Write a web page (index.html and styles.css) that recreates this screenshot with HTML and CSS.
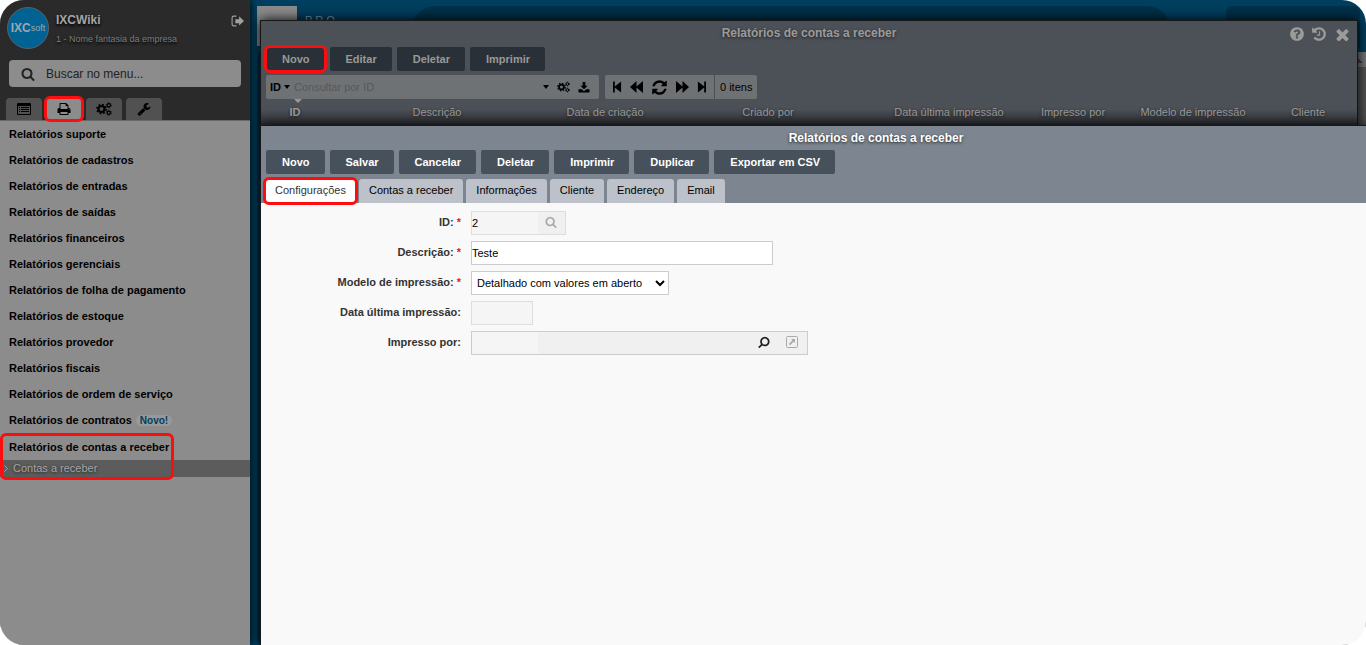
FILE: index.html
```html
<!DOCTYPE html>
<html lang="pt-BR">
<head>
<meta charset="utf-8">
<title>Relatórios de contas a receber</title>
<link rel="stylesheet" href="styles.css">
</head>
<body>
<svg class="sprite" aria-hidden="true">
  <symbol id="search" viewBox="0 0 1792 1792"><path d="M1216 832q0-185-131.5-316.5t-316.5-131.5-316.5 131.5-131.5 316.5 131.5 316.5 316.5 131.5 316.5-131.5 131.5-316.5zm512 832q0 52-38 90t-90 38q-54 0-90-38l-343-342q-179 124-399 124-143 0-273.5-55.5t-225-150-150-225-55.5-273.5 55.5-273.5 150-225 225-150 273.5-55.5 273.5 55.5 225 150 150 225 55.5 273.5q0 220-124 399l343 343q37 37 37 90z"/></symbol>
  <symbol id="print" viewBox="0 0 1792 1792"><path d="M448 1536h896v-256h-896v256zm0-640h896v-384h-160q-40 0-68-28t-28-68v-160h-640v640zm1152 64q0-26-19-45t-45-19-45 19-19 45 19 45 45 19 45-19 19-45zm128 0v416q0 13-9.500 22.500t-22.500 9.500h-224v160q0 40-28 68t-68 28h-960q-40 0-68-28t-28-68v-160h-224q-13 0-22.500-9.500t-9.500-22.500v-416q0-79 56.500-135.500t135.500-56.500h64v-544q0-40 28-68t68-28h672q40 0 88 20t76 48l152 152q28 28 48 76t20 88v256h64q79 0 135.500 56.500t56.500 135.500z"/></symbol>
  <symbol id="wrench" viewBox="0 0 1792 1792"><path d="M448 1472q0-26-19-45t-45-19-45 19-19 45 19 45 45 19 45-19 19-45zm644-420l-682 682q-37 37-90 37-52 0-91-37l-106-108q-38-36-38-90 0-53 38-91l681-681q39 98 114.500 173.500t173.500 114.500zm634-435q0 39-23 106-47 134-164.500 217.500t-258.500 83.500q-185 0-316.500-131.500t-131.500-316.500 131.500-316.500 316.500-131.500q58 0 121.500 16.500t107.500 46.500q16 11 16 28t-16 28l-293 169v224l193 107q5-3 79-48.500t135.500-81 70.500-35.500q15 0 23.500 10t8.500 25z"/></symbol>
  <symbol id="help" viewBox="0 0 1792 1792"><path d="M1024 1376v-192q0-14-9-23t-23-9h-192q-14 0-23 9t-9 23v192q0 14 9 23t23 9h192q14 0 23-9t9-23zm256-672q0-88-55.500-163t-138.500-116-170-41q-243 0-371 213-15 24 8 42l132 100q7 6 19 6 16 0 25-12 53-68 86-92 34-24 86-24 48 0 85.500 26t37.500 59q0 38-20 61t-68 45q-63 28-115.500 86.500t-52.500 125.500v36q0 14 9 23t23 9h192q14 0 23-9t9-23q0-19 21.500-49.500t54.500-49.500q32-18 49-28.500t46-35 44.500-48 28-60.500 12.500-81zm384 192q0 209-103 385.500t-279.500 279.500-385.500 103-385.500-103-279.500-279.500-103-385.500 103-385.500 279.500-279.500 385.500-103 385.500 103 279.500 279.500 103 385.500z"/></symbol>
  <symbol id="close" viewBox="256 256 1280 1280"><path d="M1490 1322q0 40-28 68l-136 136q-28 28-68 28t-68-28l-294-294-294 294q-28 28-68 28t-68-28l-136-136q-28-28-28-68t28-68l294-294-294-294q-28-28-28-68t28-68l136-136q28-28 68-28t68 28l294 294 294-294q28-28 68-28t68 28l136 136q28 28 28 68t-28 68l-294 294 294 294q28 28 28 68z"/></symbol>
  <symbol id="history" viewBox="0 0 1792 1792"><path d="M1664 896q0 156-61 298t-164 245-245 164-298 61q-172 0-327-72.500t-264-204.500q-7-10-6.500-22.500t8.500-20.500l137-138q10-9 25-9 16 2 23 12 73 95 179 147t225 52q104 0 198.500-40.500t163.500-109.500 109.500-163.500 40.500-198.500-40.500-198.500-109.500-163.500-163.500-109.500-198.500-40.500q-98 0-188 35.500t-160 101.500l137 138q31 30 14 69-17 40-59 40h-448q-26 0-45-19t-19-45v-448q0-42 40-59 39-17 69 14l130 129q107-101 244.500-156.500t284.500-55.500q156 0 298 61t245 164 164 245 61 298zm-640-288v448q0 14-9 23t-23 9h-320q-14 0-23-9t-9-23v-64q0-14 9-23t23-9h224v-352q0-14 9-23t23-9h64q14 0 23 9t9 23z"/></symbol>
  <symbol id="refresh" viewBox="0 0 1792 1792"><path d="M1639 1056q0 5-1 7-64 268-268 434.500t-478 166.500q-146 0-282.500-55t-243.500-157l-129 129q-19 19-45 19t-45-19-19-45v-448q0-26 19-45t45-19h448q26 0 45 19t19 45-19 45l-137 137q71 66 161 102t187 36q134 0 250-65t186-179q11-17 53-117 8-23 30-23h192q13 0 22.500 9.500t9.500 22.500zm25-800v448q0 26-19 45t-45 19h-448q-26 0-45-19t-19-45 19-45l138-138q-148-137-349-137-134 0-250 65t-186 179q-11 17-53 117-8 23-30 23h-199q-13 0-22.500-9.500t-9.500-22.500v-7q65-268 270-434.500t480-166.500q146 0 284 55.500t245 156.500l130-129q19-19 45-19t45 19 19 45z"/></symbol>
  <symbol id="cogs" viewBox="0 0 16 14"><g fill="none" stroke="currentColor"><circle cx="5.500" cy="7" r="3" stroke-width="2.200"/><circle cx="5.500" cy="7" r="4.600" stroke-width="1.600" stroke-dasharray="1.800 1.813"/><circle cx="12.800" cy="3.300" r="1.600" stroke-width="1.200"/><circle cx="12.800" cy="3.300" r="2.500" stroke-dasharray="1.200 1.418"/><circle cx="12.800" cy="10.700" r="1.600" stroke-width="1.200"/><circle cx="12.800" cy="10.700" r="2.500" stroke-dasharray="1.200 1.418"/></g></symbol>
  <symbol id="list" viewBox="0 0 14 12"><path fill-rule="evenodd" d="M1 0h12a1 1 0 0 1 1 1v10a1 1 0 0 1-1 1H1a1 1 0 0 1-1-1V1a1 1 0 0 1 1-1zM1 3v8h12V3zM2 4h1v1H2zM4 4h8v1H4zM2 6h1v1H2zM4 6h8v1H4zM2 8h1v1H2zM4 8h8v1H4z"/></symbol>
  <symbol id="exit" viewBox="0 0 12 12"><path d="M5 1H2.500Q1 1 1 2.500v6Q1 10 2.500 10H5" fill="none" stroke="currentColor"/><path d="M4 4h3.500V1.200L12 5.500 7.500 9.800V7.500H4z"/></symbol>
  <symbol id="download" viewBox="0 0 12 12"><path d="M4.500 0h3v4H10L6 8 2 4h2.500zM0 8h3.500L6 10l2.500-2H12v3.500H0z"/></symbol>
  <symbol id="first" viewBox="0 0 10 12"><path d="M0 0h2v5.500L9 0v12L2 6.500V12H0z"/></symbol>
  <symbol id="back" viewBox="0 0 13 12"><path d="M0 6l6.500-6v5.500L13 0v12L6.500 6.500V12z"/></symbol>
  <symbol id="open" viewBox="0 0 12 12"><rect x=".5" y=".5" width="11" height="11" rx="1" fill="none" stroke="currentColor"/><path d="M5 3h4v4L7.700 5.700 4 9.200 2.800 8l3.600-3.600z"/></symbol>
  <symbol id="caret" viewBox="0 0 6 4"><path d="M0 0h6L3 4z"/></symbol>
  <symbol id="chevron" viewBox="0 0 4 7"><path d="M.5.5l3 3-3 3" fill="none" stroke="currentColor"/></symbol>
</svg>

<div class="app">
  <aside class="sidebar">
    <header class="side-head">
      <div class="profile">
        <div class="logo"><b>IXC</b><span>soft</span></div>
        <div class="who">
          <div class="name">IXCWiki</div>
          <div class="company">1 - Nome fantasia da empresa</div>
        </div>
        <button class="bare exit" aria-label="Sair"><svg width="13" height="13"><use href="#exit"/></svg></button>
      </div>
      <label class="menu-search">
        <svg width="14" height="14"><use href="#search"/></svg>
        <input type="text" placeholder="Buscar no menu..." aria-label="Buscar no menu">
      </label>
      <nav class="side-tabs">
        <button aria-label="Cadastros"><svg width="14" height="12"><use href="#list"/></svg></button>
        <button class="active marked" aria-label="Relatórios"><svg width="14" height="14"><use href="#print"/></svg></button>
        <button aria-label="Configurações do sistema"><svg width="16" height="14"><use href="#cogs"/></svg></button>
        <button aria-label="Ferramentas"><svg width="14" height="14"><use href="#wrench"/></svg></button>
      </nav>
    </header>
    <nav class="menu">
      <a href="#">Relatórios suporte</a>
      <a href="#">Relatórios de cadastros</a>
      <a href="#">Relatórios de entradas</a>
      <a href="#">Relatórios de saídas</a>
      <a href="#">Relatórios financeiros</a>
      <a href="#">Relatórios gerenciais</a>
      <a href="#">Relatórios de folha de pagamento</a>
      <a href="#">Relatórios de estoque</a>
      <a href="#">Relatórios provedor</a>
      <a href="#">Relatórios fiscais</a>
      <a href="#">Relatórios de ordem de serviço</a>
      <a href="#">Relatórios de contratos <span class="new">Novo!</span></a>
      <div class="menu-group">
        <a href="#">Relatórios de contas a receber</a>
        <a href="#" class="sub"><svg width="4" height="7"><use href="#chevron"/></svg>Contas a receber</a>
      </div>
    </nav>
  </aside>

  <main class="desktop">
    <div class="backdrop">
      <div class="brand"></div>
      <div class="brand-name">P R O —</div>
      <div class="pill"></div>
      <div class="panel"></div>
    </div>
    <div class="backdrop-body"><div class="scroll"><svg width="10" height="5" viewBox="0 0 10 5"><path d="M0 5L5 0l5 5z"/></svg></div></div>

    <section class="window list-window">
      <h2 class="title">Relatórios de contas a receber</h2>
      <div class="window-tools">
        <button class="bare" aria-label="Ajuda"><svg width="16" height="16"><use href="#help"/></svg></button>
        <button class="bare" aria-label="Histórico"><svg width="16" height="16"><use href="#history"/></svg></button>
        <button class="bare close" aria-label="Fechar"><svg width="13" height="13"><use href="#close"/></svg></button>
      </div>
      <div class="actions">
        <button class="marked">Novo</button>
        <button>Editar</button>
        <button>Deletar</button>
        <button>Imprimir</button>
      </div>
      <div class="filter-row">
        <div class="filter">
          <button class="bare field"><span>ID</span><svg width="6" height="4"><use href="#caret"/></svg></button>
          <input type="text" placeholder="Consultar por ID" aria-label="Consultar por ID">
          <button class="bare" aria-label="Opções"><svg width="6" height="4"><use href="#caret"/></svg></button>
          <button class="bare" aria-label="Configurar"><svg width="13" height="12"><use href="#cogs"/></svg></button>
          <button class="bare" aria-label="Baixar"><svg width="12" height="11"><use href="#download"/></svg></button>
        </div>
        <div class="pager">
          <button class="bare" aria-label="Primeira"><svg width="9" height="12"><use href="#first"/></svg></button>
          <button class="bare" aria-label="Anterior"><svg width="13" height="12"><use href="#back"/></svg></button>
          <button class="bare" aria-label="Atualizar"><svg width="17" height="17"><use href="#refresh"/></svg></button>
          <button class="bare flip" aria-label="Próxima"><svg width="13" height="12"><use href="#back"/></svg></button>
          <button class="bare flip" aria-label="Última"><svg width="9" height="12"><use href="#first"/></svg></button>
          <span class="count">0 itens</span>
        </div>
      </div>
      <table class="grid">
        <colgroup><col class="c1"><col class="c2"><col class="c3"><col class="c4"><col class="c5"><col class="c6"><col class="c7"><col class="c8"></colgroup>
        <thead><tr><th class="sorted">ID</th><th>Descrição</th><th>Data de criação</th><th>Criado por</th><th>Data última impressão</th><th>Impresso por</th><th>Modelo de impressão</th><th>Cliente</th></tr></thead>
      </table>
    </section>

    <section class="window form-window">
      <header class="form-head">
        <h2 class="title">Relatórios de contas a receber</h2>
        <div class="actions">
          <button>Novo</button>
          <button>Salvar</button>
          <button>Cancelar</button>
          <button>Deletar</button>
          <button>Imprimir</button>
          <button>Duplicar</button>
          <button>Exportar em CSV</button>
        </div>
        <nav class="tabs">
          <button class="current marked">Configurações</button>
          <button>Contas a receber</button>
          <button>Informações</button>
          <button>Cliente</button>
          <button>Endereço</button>
          <button>Email</button>
        </nav>
      </header>
      <form class="form">
        <label for="id">ID: <i>*</i></label>
        <div class="lookup small"><input id="id" type="text" value="2" readonly><button type="button" class="bare" aria-label="Buscar ID"><svg width="12" height="12"><use href="#search"/></svg></button></div>
        <label for="desc">Descrição: <i>*</i></label>
        <input id="desc" class="box wide" type="text" value="Teste">
        <label for="model">Modelo de impressão: <i>*</i></label>
        <select id="model" class="box"><option>Detalhado com valores em aberto</option></select>
        <label for="date">Data última impressão:</label>
        <input id="date" class="box off" type="text" readonly>
        <label for="by">Impresso por:</label>
        <div class="lookup large"><input id="by" type="text" readonly><button type="button" class="bare flip dark" aria-label="Buscar usuário"><svg width="12" height="12"><use href="#search"/></svg></button><button type="button" class="bare" aria-label="Abrir usuário"><svg width="12" height="12"><use href="#open"/></svg></button></div>
      </form>
    </section>
  </main>
</div>
</body>
</html>
```
FILE: styles.css
```css
*, *::before, *::after { box-sizing: border-box; }

body {
  margin: 0;
  background: #fff;
  font: 11px/14px "Liberation Sans", Arial, sans-serif;
  color: #000;
}

button, input, select { font: inherit; color: inherit; }
button { border: 0; margin: 0; cursor: pointer; }
svg { display: block; fill: currentColor; }
a { color: inherit; text-decoration: none; }

.sprite { display: none; }

.bare {
  display: flex;
  align-items: center;
  padding: 0;
  background: none;
}
.flip svg { transform: scaleX(-1); }
.marked { outline: 3px solid #fd0d0d; }

.app {
  display: flex;
  min-height: 100vh;
  border-radius: 24px;
  overflow: hidden;
}

/* Sidebar */
.sidebar {
  flex: 0 0 250px;
  background: #8c8c8c;
  box-shadow: 0 0 8px #000;
  z-index: 1;
}
.side-head {
  background: #2a2a2a;
  border-bottom: 1px solid #686868;
}
.profile {
  display: flex;
  align-items: flex-start;
  gap: 7px;
  height: 60px;
  padding: 7px 6px 0 7px;
}
.logo {
  display: flex;
  align-items: center;
  justify-content: center;
  width: 42px;
  height: 42px;
  border: 1px solid #56616a;
  border-radius: 50%;
  background: #006394;
  color: #9ca8ae;
  font-size: 9px;
}
.logo b { font-size: 12px; }
.who { flex: 1; padding-top: 6px; text-shadow: 0 2px 3px #000; }
.name { font-size: 12px; font-weight: bold; color: #a5a5a5; }
.company { padding-top: 5px; font-size: 9px; color: #7b7b7b; }
.exit { padding-top: 8px; color: #a0a0a0; }
.menu-search {
  display: flex;
  align-items: center;
  gap: 9px;
  height: 27px;
  margin: 0 9px;
  padding: 0 12px;
  border-radius: 4px;
  background: #8c8c8c;
  color: #222;
}
.menu-search input {
  flex: 1;
  min-width: 0;
  border: 0;
  background: none;
  font-size: 12px;
}
.menu-search input::placeholder { color: #222; }
.side-tabs {
  display: flex;
  gap: 4px;
  padding: 11px 6px 0;
}
.side-tabs button {
  display: flex;
  align-items: center;
  justify-content: center;
  width: 36px;
  height: 22px;
  padding: 0;
  border-radius: 4px 4px 0 0;
  background: #515151;
}
.side-tabs .marked {
  border-radius: 4px;
  outline-offset: -1px;
  background: #8c8c8c;
}
.menu a {
  display: flex;
  align-items: center;
  gap: 4px;
  height: 26px;
  padding: 0 9px;
  font-weight: bold;
}
.new {
  padding: 0 4px;
  border-radius: 6px;
  background: #999;
  color: #00405f;
  font-size: 10px;
  line-height: 11px;
}
.menu-group { position: relative; padding-top: 1px; }
.menu-group::after {
  content: "";
  position: absolute;
  inset: 0 auto -3px 0;
  width: 174px;
  border: 3px solid #fd0d0d;
  border-radius: 6px;
}
.menu .sub {
  gap: 5px;
  height: 17px;
  padding: 0 4px 1px;
  background: #5c5c5c;
  color: #a5a5a5;
  font-weight: normal;
  text-shadow: 0 1px 3px #222;
}

/* Desktop behind the windows */
.desktop {
  position: relative;
  flex: 1;
  min-width: 0;
  border-bottom-right-radius: 60px;
  background: #003f5f;
}
.backdrop {
  display: flex;
  height: 52px;
  padding: 6px 6px 0 7px;
}
.brand { width: 40px; height: 40px; background: #8c8c8c; }
.brand-name { width: 115px; padding: 7px 8px; color: #7f98a3; }
.pill { flex: 1; border-radius: 24px; background: #003049; }
.panel { width: 134px; margin-left: 56px; border-radius: 6px; background: #003049; }
.backdrop-body {
  display: flex;
  justify-content: flex-end;
  height: calc(100vh - 52px);
  margin-left: 7px;
  border-radius: 6px 0 60px 6px;
  background: #003049;
}
.scroll {
  width: 16px;
  height: 200px;
  border-top: 15px solid #777;
  background: #555;
}
.scroll svg { margin: -9px 0 0 3px; fill: #444; }

/* Windows */
.window { position: absolute; box-shadow: 0 0 12px #000; }
.title {
  margin: 0;
  font-size: 12px;
  line-height: 14px;
  text-align: center;
  text-shadow: 0 1px 3px #222;
}
.actions { display: flex; gap: 5px; padding: 0 5px; }
.actions button {
  height: 24px;
  padding: 0 15px 0 16px;
  border-radius: 2px;
  background: #47515c;
  color: #fff;
  font-weight: bold;
}
.list-window {
  inset: 20px 8px auto 10px;
  height: 106px;
  padding-top: 5px;
  border: 1px solid #151719;
  background: linear-gradient(#4c5057 85%, #303236);
  color: #9b9b9b;
}
.list-window .actions { padding-top: 7px; }
.list-window .actions button { background: #293037; color: #999; }
.list-window .actions .marked { outline-offset: -1px; border-radius: 4px; }
.window-tools {
  position: absolute;
  top: 5px;
  right: 8px;
  display: flex;
  gap: 6px;
}
.close { margin-left: 3px; }
.filter-row {
  display: flex;
  gap: 6px;
  padding: 4px 5px 0;
  color: #000;
}
.filter, .pager {
  display: flex;
  align-items: center;
  height: 24px;
  border-radius: 2px;
  background: #6f7275;
}
.filter { width: 333px; gap: 8px; padding: 0 9px 0 4px; }
.field { gap: 3px; font-weight: bold; }
.filter input {
  flex: 1;
  min-width: 0;
  margin-left: -4px;
  padding: 0;
  border: 0;
  background: none;
}
.filter input::placeholder { color: #55585a; }
.pager { gap: 8px; padding-left: 8px; }
.count {
  padding: 5px 5px;
  border-left: 1px solid #4c5057;
}
.grid {
  width: calc(100% - 8px);
  margin: 4px 7px 0 1px;
  border-collapse: collapse;
  table-layout: fixed;
}
.grid th { padding: 2px 0; font-weight: normal; text-shadow: 0 1px 3px #222; }
.grid .sorted { position: relative; font-weight: bold; }
.sorted::before {
  content: "";
  position: absolute;
  top: -4px;
  left: 32px;
  border: 4px solid transparent;
  border-top-color: #999;
  border-bottom: 0;
}
.c1 { width: 66px; }
.c2 { width: 218px; }
.c3 { width: 118px; }
.c4 { width: 208px; }
.c5 { width: 154px; }
.c6 { width: 94px; }
.c7 { width: 146px; }
.c8 { width: 84px; }

.form-window {
  inset: 105px 0 0 10px;
  top: 125px;
  border: solid #15191d;
  border-width: 1px 0 0 1px;
  background: #f9f9f9;
}
.form-head { padding-top: 5px; background: #7d8690; }
.form-head .title { padding-left: 125px; color: #fff; }
.form-head .actions { padding-top: 5px; }
.tabs { display: flex; gap: 3px; padding: 5px 4px 0; }
.tabs button {
  height: 24px;
  padding: 0 10px 2px;
  border-radius: 3px 3px 0 0;
  background: #bcc1ca;
}
.tabs .current {
  border-radius: 4px;
  outline-offset: -1px;
  background: #fff;
  color: #333;
}
.form {
  display: grid;
  grid-template-columns: 200px 1fr;
  gap: 6px 10px;
  justify-items: start;
  padding: 8px 0;
}
.form > label {
  justify-self: end;
  line-height: 22px;
  font-weight: bold;
  color: #333;
}
.form i { color: #e02020; font-style: normal; }
.box {
  height: 24px;
  padding: 0 1px;
  border: 1px solid #ccc;
  border-radius: 0;
  background: #fff;
}
input.box { padding: 0; }
.wide { width: 302px; }
select.box { width: 198px; }
.off { width: 62px; border-color: #ddd; background: #f5f5f5; }
.lookup {
  display: flex;
  height: 24px;
  border: 1px solid #ccc;
  background: #f0f0f0;
}
.lookup input {
  width: 66px;
  padding: 0;
  border: 0;
  background: #f5f5f5;
}
.lookup .bare { width: 28px; padding: 0 2px 2px 0; justify-content: center; color: #aaa; }
.lookup .dark { margin-left: auto; color: #222; }
.small { width: 95px; border-color: #ddd; }
.large { width: 337px; }
```
